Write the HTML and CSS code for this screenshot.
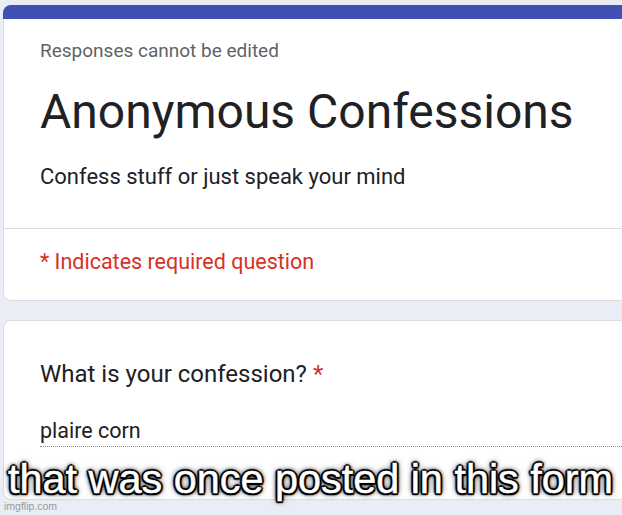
FILE: index.html
```html
<!DOCTYPE html>
<html lang="en">
<head>
  <meta charset="UTF-8">
  <title>Anonymous Confessions</title>
  <link rel="stylesheet" href="styles.css">
</head>
<body>

  <div class="page">
    <div class="card header-card">
      <div class="card-top"></div>
      <div class="header-body">
        <p class="note">Responses cannot be edited</p>
        <h1 class="title">Anonymous Confessions</h1>
        <p class="desc">Confess stuff or just speak your mind</p>
      </div>
      <div class="required-row">
        <p class="required">* Indicates required question</p>
      </div>
    </div>

    <div class="card question-card">
      <p class="question">What is your confession? <span class="star">*</span></p>
      <p class="answer">plaire corn</p>
    </div>
  </div>

  <div class="caption">that was once posted in this form</div>
  <div class="watermark">imgflip.com</div>

</body>
</html>
```

FILE: styles.css
```css
body {
  margin: 0;
  background-color: #ebedf6;
  font-family: Roboto, "Noto Sans", sans-serif;
  color: #202124;
  height: 515px;
  overflow: hidden;
  position: relative;
}

p, h1 {
  margin: 0;
}

.page {
  padding: 5px 0 0 3px;
  display: flex;
  flex-direction: column;
  gap: 19px;
}

.card {
  background-color: white;
  border: 1px solid #dadce0;
  border-right: none;
  border-radius: 8px 0 0 8px;
  margin-right: -10px;
}

.card-top {
  height: 14px;
  background-color: #3f51b5;
  border-radius: 8px 0 0 0;
  margin: -1px 0 0 -1px;
}

.header-body {
  box-sizing: border-box;
  padding: 19px 0 0 36px;
  height: 210px;
  border-bottom: 1px solid #dadce0;
}

.note {
  font-size: 19px;
  color: #5f6368;
  line-height: 26px;
}

.title {
  font-size: 48px;
  font-weight: 400;
  line-height: 56px;
  margin-top: 20px;
}

.desc {
  font-size: 22px;
  line-height: 30px;
  margin-top: 22px;
}

.required-row {
  box-sizing: border-box;
  height: 71px;
  padding: 0 0 6px 36px;
  display: flex;
  align-items: center;
}

.required {
  font-size: 21.5px;
  color: #d93025;
}

.question-card {
  height: 180px;
  padding: 37px 0 0 36px;
  box-sizing: border-box;
}

.question {
  font-size: 24px;
  line-height: 32px;
}

.star {
  color: #d93025;
}

.answer {
  font-size: 21.5px;
  line-height: 28px;
  margin-top: 27px;
  padding-bottom: 1px;
  border-bottom: 1px dotted #8a8a8a;
}

.caption {
  position: absolute;
  left: 8px;
  top: 456px;
  font-family: "Liberation Sans", Arial, sans-serif;
  font-size: 41.4px;
  color: white;
  white-space: nowrap;
  -webkit-text-stroke: 0.5px white;
  text-shadow:
    1.5px 1.5px 1px black, -1.5px -1.5px 1px black,
    1.5px -1.5px 1px black, -1.5px 1.5px 1px black,
    0 2px 1px black, 0 -2px 1px black,
    2px 0 1px black, -2px 0 1px black,
    0 0 5px black, 0 0 7px rgba(0, 0, 0, 0.8);
}

.watermark {
  position: absolute;
  left: 4px;
  top: 500px;
  font-family: "Liberation Sans", Arial, sans-serif;
  font-size: 10.5px;
  color: #9a9a9a;
}
```
